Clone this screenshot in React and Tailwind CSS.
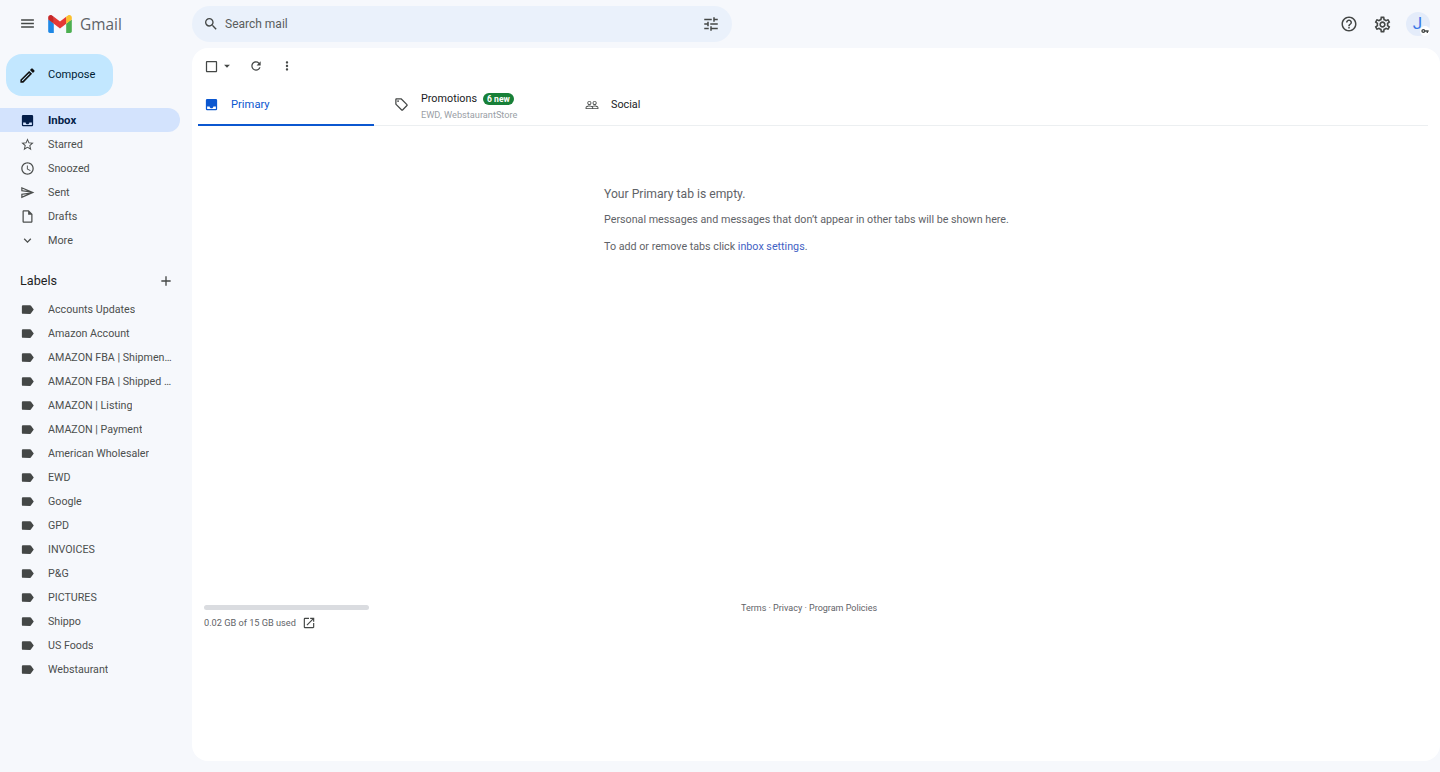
import React from 'react';
import {
  MdMenu, MdSearch, MdTune, MdHelpOutline, MdOutlineSettings, MdOutlineEdit, MdStarBorder,
  MdAccessTime, MdOutlineSend, MdOutlineInsertDriveFile, MdExpandMore, MdAdd, MdLabel,
  MdCheckBoxOutlineBlank, MdArrowDropDown, MdRefresh, MdMoreVert, MdOutlineLocalOffer,
  MdPeopleOutline, MdOpenInNew, MdVpnKey,
} from 'react-icons/md';

// the filled inbox glyph, the icon package only has the outlined one
const InboxFilled = ({ className }) => (
  <svg viewBox="0 0 24 24" fill="currentColor" fillRule="evenodd" width="1em" height="1em" className={className}>
    <path d="M5 3h14a2 2 0 0 1 2 2v14a2 2 0 0 1-2 2H5a2 2 0 0 1-2-2V5a2 2 0 0 1 2-2zM5 15v4h14v-4h-4c0 1.66-1.34 3-3 3s-3-1.34-3-3H5z" />
  </svg>
);

const navItems = [
  { name: 'Inbox', icon: InboxFilled, active: true },
  { name: 'Starred', icon: MdStarBorder },
  { name: 'Snoozed', icon: MdAccessTime },
  { name: 'Sent', icon: MdOutlineSend },
  { name: 'Drafts', icon: MdOutlineInsertDriveFile },
  { name: 'More', icon: MdExpandMore },
];

const labels = [
  'Accounts Updates', 'Amazon Account', 'AMAZON FBA | Shipment Created', 'AMAZON FBA | Shipped to Amazon',
  'AMAZON | Listing', 'AMAZON | Payment', 'American Wholesaler', 'EWD', 'Google', 'GPD', 'INVOICES',
  'P&G', 'PICTURES', 'Shippo', 'US Foods', 'Webstaurant',
];

const GmailLogo = () => (
  <svg viewBox="3 8 42 32" width="24" height="18">
    <path fill="#4caf50" d="M45,16.2l-5,2.75l-5,4.75L35,40h7c1.657,0,3-1.343,3-3V16.2z" />
    <path fill="#1e88e5" d="M3,16.2l3.614,1.71L13,23.7V40H6c-1.657,0-3-1.343-3-3V16.2z" />
    <polygon fill="#e53935" points="35,11.2 24,19.45 13,11.2 12,17 13,23.7 24,31.95 35,23.7 36,17" />
    <path fill="#c62828" d="M3,12.298V16.2l10,7.5V11.2L9.876,8.859C9.132,8.301,8.228,8,7.298,8h0C4.924,8,3,9.924,3,12.298z" />
    <path fill="#fbc02d" d="M45,12.298V16.2l-10,7.5V11.2l3.124-2.341C38.868,8.301,39.772,8,40.702,8h0C43.076,8,45,9.924,45,12.298z" />
  </svg>
);

const Sidebar = () => (
  <aside className="w-[192px] shrink-0">
    <div className="pl-[6px] pt-[6px]">
      <button className="flex h-[42px] w-[107px] items-center rounded-2xl bg-[#c2e7ff] pl-[12px] text-[11.1px] text-[#001d35]">
        <MdOutlineEdit className="mr-[11px] text-[19px] text-[#111]" />
        Compose
      </button>
    </div>

    {/* Main folders */}
    <nav className="mt-[12px]">
      {navItems.map((item) => (
        <div
          key={item.name}
          className={`flex h-[24px] w-[180px] items-center rounded-r-full pl-[20px] ${
            item.active ? 'bg-[#d3e3fd] text-[11.4px] font-bold text-[#041e49]' : 'text-[10.8px] text-[#4c4f4e]'
          }`}
        >
          <item.icon className="mr-[13px] shrink-0 text-[15px]" />
          <span className="pt-[2px]">{item.name}</span>
        </div>
      ))}
    </nav>

    <div className="mt-[16px] flex h-[26px] w-[180px] items-center justify-between pl-[20px] pr-[6px] text-[12.6px] text-[#1f1f1f]">
      Labels
      <MdAdd className="text-[16px] text-[#444746]" />
    </div>

    {/* User labels */}
    <div className="mt-[3px]">
      {labels.map((label) => (
        <div key={label} className="flex h-[24px] w-[180px] items-center pl-[20px] pr-[6px] text-[10.7px] text-[#4c4f4e]">
          <MdLabel className="mr-[13px] shrink-0 text-[15px] text-[#444746]" />
          <span className="truncate pt-[2px]">{label}</span>
        </div>
      ))}
    </div>
  </aside>
);

const Tabs = () => (
  <div className="mx-[6px] mr-[12px] flex h-[42px] border-b border-[#eceff1]">
    <div className="flex h-[42px] w-[176px] items-center border-b-[2px] border-[#0b57d0] pl-[6px] text-[11.2px] text-[#0b57d0]">
      <InboxFilled className="mr-[12px] text-[15px]" />
      <span className="pt-[3px]">Primary</span>
    </div>
    <div className="flex w-[191px] items-center pl-[20px]">
      <MdOutlineLocalOffer className="mr-[12px] text-[15px] text-[#444746]" />
      <div className="pt-[2px]">
        <div className="flex items-center pt-[1px] text-[10.8px] leading-[15px] text-[#202124]">
          Promotions
          <span className="ml-[6px] rounded-full bg-[#188038] px-[4px] text-[8.6px] font-bold leading-[12px] text-white">6 new</span>
        </div>
        <div className="mt-[2px] text-[9.2px] leading-[13px] text-[#9aa0a6]">EWD, WebstaurantStore</div>
      </div>
    </div>
    <div className="flex items-center pl-[20px] text-[10.8px] text-[#202124]">
      <MdPeopleOutline className="mr-[12px] text-[14px] text-[#444746]" />
      <span className="pt-[2px]">Social</span>
    </div>
  </div>
);

export default function App() {
  return (
    <div className="flex h-screen flex-col overflow-hidden bg-[#f6f8fc] font-['Roboto',sans-serif]">
      {/* Top bar */}
      <header className="flex h-[48px] shrink-0 items-center">
        <div className="flex w-[192px] items-center pl-[19px]">
          <MdMenu className="text-[17px] text-[#444746]" />
          <span className="ml-[12px]"><GmailLogo /></span>
          <span className="ml-[8px] pt-[1px] font-['Open_Sans',sans-serif] text-[15.4px] text-[#5f6368]">Gmail</span>
        </div>
        <div className="flex h-[36px] w-[540px] items-center rounded-full bg-[#eaf1fb] px-[11px]">
          <MdSearch className="text-[16px] text-[#444746]" />
          <span className="ml-[6px] flex-1 text-[12px] text-[#5a5d5c]">Search mail</span>
          <MdTune className="mr-[1px] text-[18px] text-[#444746]" />
        </div>
        <div className="ml-auto flex items-center pr-[10px]">
          <MdHelpOutline className="text-[18px] text-[#444746]" />
          <MdOutlineSettings className="ml-[15px] text-[19px] text-[#444746]" />
          <div className="relative ml-[14px] flex h-[24px] w-[24px] items-center justify-center rounded-full bg-[#e4ecfa] pr-[1px] text-[17px] text-[#3b78e7]">
            J
            <span className="absolute bottom-0 right-0 flex h-[10px] w-[10px] items-center justify-center rounded-full bg-white">
              <MdVpnKey className="text-[8px] text-[#444746]" />
            </span>
          </div>
        </div>
      </header>

      <div className="flex min-h-0 flex-1 pb-[11px]">
        <Sidebar />

        <main className="flex flex-1 flex-col rounded-2xl bg-white">
          {/* Toolbar */}
          <div className="flex h-[36px] shrink-0 items-center pl-[12px] text-[#444746]">
            <MdCheckBoxOutlineBlank className="text-[15px]" />
            <MdArrowDropDown className="ml-[1px] text-[14px]" />
            <MdRefresh className="ml-[15px] text-[14px]" />
            <MdMoreVert className="ml-[17px] text-[14px]" />
          </div>

          <Tabs />

          {/* Empty tab message */}
          <div className="ml-[412px] mt-[59px] h-[420px] shrink-0">
            <p className="text-[12.15px] leading-[18px] text-[#5f6368]">Your Primary tab is empty.</p>
            <p className="mt-[9px] text-[10.72px] leading-[16px] text-[#5f6368]">
              Personal messages and messages that don’t appear in other tabs will be shown here.
            </p>
            <p className="mt-[11px] text-[10.72px] leading-[16px] text-[#5f6368]">
              To add or remove tabs click <span className="text-[#3f62c4]">inbox settings</span>.
            </p>
          </div>

          {/* Footer */}
          <footer className="flex">
            <div className="ml-[12px] w-[165px]">
              <div className="h-[5px] rounded-full bg-[#dadce0]" />
              <div className="mt-[6px] flex items-center text-[9.2px] leading-[14px] text-[#5f6368]">
                0.02 GB of 15 GB used
                <MdOpenInNew className="ml-[6px] text-[14px] text-[#444746]" />
              </div>
            </div>
            <div className="ml-[372px] mt-[-3px] text-[9px] leading-[13px] text-[#5f6368]">Terms · Privacy · Program Policies</div>
          </footer>
        </main>
      </div>
    </div>
  );
}
